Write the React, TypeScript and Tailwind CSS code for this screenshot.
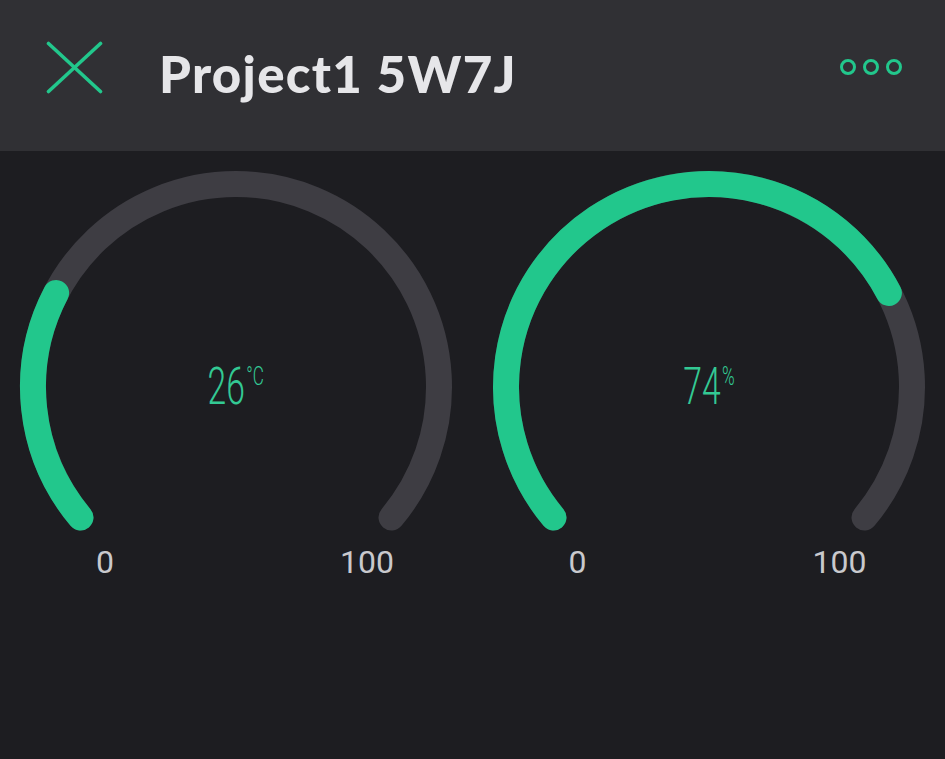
import React from "react";

const CX = 236;
const CY = 236;
const R = 203;
const START = 220;
const SWEEP = 260;

function pt(deg: number) {
  const a = (deg * Math.PI) / 180;
  return [CX + R * Math.cos(a), CY - R * Math.sin(a)];
}

function arc(from: number, to: number) {
  const [x1, y1] = pt(from);
  const [x2, y2] = pt(to);
  const large = from - to > 180 ? 1 : 0;
  return `M ${x1.toFixed(2)} ${y1.toFixed(2)} A ${R} ${R} 0 ${large} 1 ${x2.toFixed(2)} ${y2.toFixed(2)}`;
}

function Gauge({ value, unit }: { value: number; unit: string }) {
  const end = START - (SWEEP * value) / 100;
  return (
    <div className="flex flex-col">
      <div className="relative h-[394px] w-full">
        <svg width="472" height="394" viewBox="0 0 472 394" className="block">
          <path d={arc(START, START - SWEEP)} fill="none" stroke="#3e3d43" strokeWidth="26" strokeLinecap="round" />
          <path d={arc(START, end)} fill="none" stroke="#22c78c" strokeWidth="26" strokeLinecap="round" />
        </svg>
        <div className="absolute left-0 top-[216px] flex w-[472px] justify-center">
          <div className="flex origin-center scale-x-[0.66] items-start text-[#33c994]" style={{ fontFamily: "Roboto, sans-serif" }}>
            <span className="text-[51px] font-light leading-[40px]">{value}</span>
            <span className="ml-[2px] mt-[-4px] text-[26px] font-light leading-[26px]">{unit}</span>
          </div>
        </div>
      </div>
      <div className="mt-[1px] flex text-[32px] leading-[32px] text-[#c9c9cd]" style={{ fontFamily: "Roboto, sans-serif" }}>
        <div className="ml-[65px] w-[80px] text-center">0</div>
        <div className="ml-[182px] w-[80px] text-center">100</div>
      </div>
    </div>
  );
}

export default function App() {
  return (
    <div className="flex h-[759px] w-[945px] flex-col overflow-hidden bg-[#1d1d21]">
      <div className="flex h-[151px] shrink-0 items-center bg-[#303034] pl-[46px] pr-[43px]">
        <svg width="57" height="53" viewBox="0 0 57 53" className="mb-[16px] shrink-0">
          <line x1="2.5" y1="2.5" x2="54.5" y2="50.5" stroke="#22c78c" strokeWidth="3.6" strokeLinecap="round" />
          <line x1="54.5" y1="2.5" x2="2.5" y2="50.5" stroke="#22c78c" strokeWidth="3.6" strokeLinecap="round" />
        </svg>
        <div
          className="ml-[56px] mb-[5px] text-[51px] font-black leading-none tracking-[1.3px] text-[#e6e6e9]"
          style={{ fontFamily: "Lato, sans-serif" }}
        >
          Project1 5W7J
        </div>
        <div className="ml-auto mb-[18px] flex gap-[7px]">
          <div className="h-[16px] w-[16px] rounded-full border-[3.5px] border-[#22c78c]" />
          <div className="h-[16px] w-[16px] rounded-full border-[3.5px] border-[#22c78c]" />
          <div className="h-[16px] w-[16px] rounded-full border-[3.5px] border-[#22c78c]" />
        </div>
      </div>
      <div className="grid grid-cols-2">
        <Gauge value={26} unit="°C" />
        <Gauge value={74} unit="%" />
      </div>
    </div>
  );
}
